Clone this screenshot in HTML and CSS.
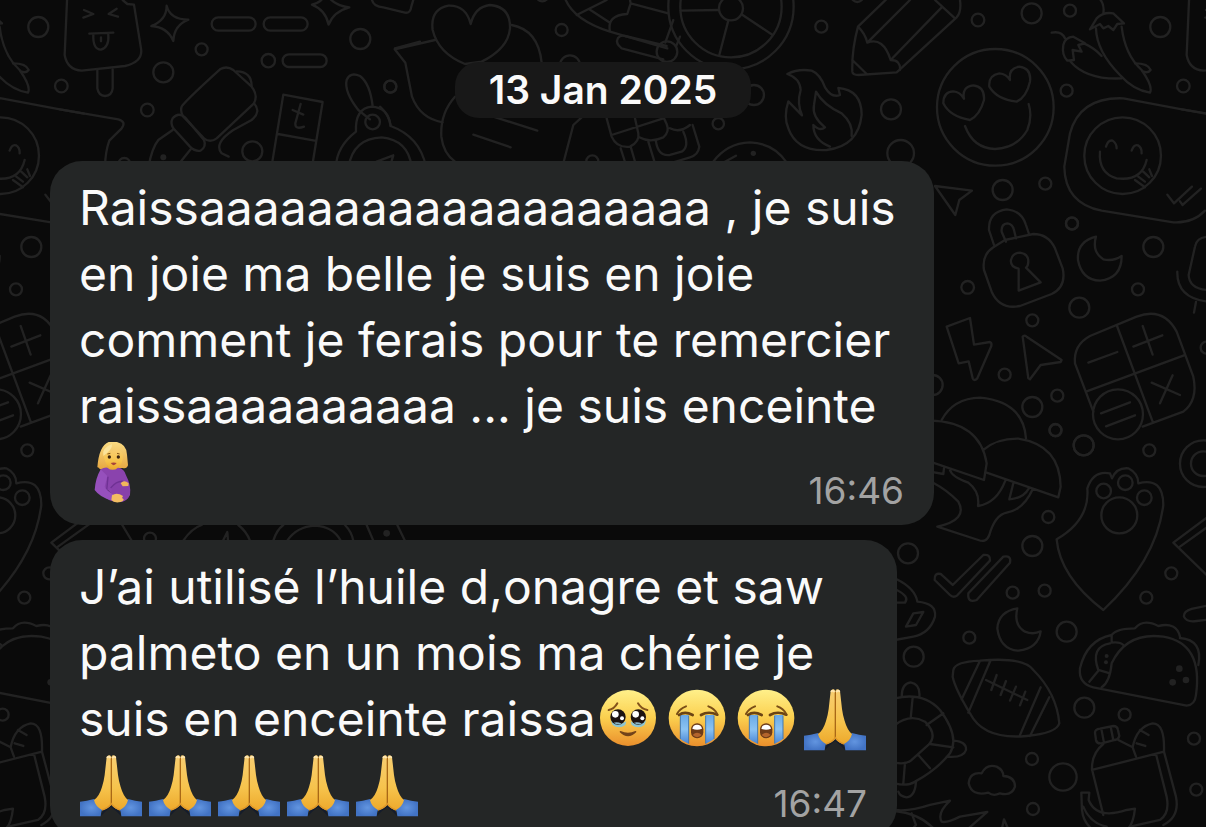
FILE: index.html
```html
<!DOCTYPE html>
<html lang="fr">
<head>
  <meta charset="UTF-8">
  <meta name="viewport" content="width=device-width, initial-scale=1.0">
  <title>Chat</title>
  <link rel="stylesheet" href="styles.css">
</head>
<body>
  <!-- Emoji -->
  <svg class="sprites" aria-hidden="true">
    <defs>
      <linearGradient id="face" x1="0" y1="0" x2="0" y2="1">
        <stop offset="0" stop-color="#fff08a"/>
        <stop offset=".5" stop-color="#fbcf4e"/>
        <stop offset="1" stop-color="#ea8f2c"/>
      </linearGradient>
      <linearGradient id="skin" x1="0" y1="0" x2="0" y2="1">
        <stop offset="0" stop-color="#f8ce72"/>
        <stop offset=".6" stop-color="#f6c34c"/>
        <stop offset="1" stop-color="#eda92c"/>
      </linearGradient>
      <linearGradient id="hair" x1="0" y1="0" x2="0" y2="1">
        <stop offset="0" stop-color="#fbdc83"/>
        <stop offset="1" stop-color="#e6a63f"/>
      </linearGradient>
      <linearGradient id="tear" x1="0" y1="0" x2="0" y2="1">
        <stop offset="0" stop-color="#6aa9e6"/>
        <stop offset=".5" stop-color="#8bc3f3"/>
        <stop offset="1" stop-color="#4a86d6"/>
      </linearGradient>
      <radialGradient id="sleeve">
        <stop offset="0" stop-color="#6295e0"/>
        <stop offset="1" stop-color="#4273c4"/>
      </radialGradient>
    </defs>
    <symbol id="pray" viewBox="0 0 186 186">
      <path d="M0 140 Q20 138 42 132 L68 160 Q62 172 62 184 H0Z" fill="url(#sleeve)"/>
      <path d="M186 140 Q166 138 144 132 L118 160 Q124 172 124 184 H186Z" fill="url(#sleeve)"/>
      <path d="M62 184 L72 162 L93 146 L114 162 L124 184 L108 168 L93 156 L78 168Z" fill="#141c2c"/>
      <path d="M80 6 Q84 -1 90 1 L94 6 V150 Q82 163 66 165 Q46 154 42 135 Q58 124 66 96 Q72 76 74 60Z" fill="url(#skin)"/>
      <path d="M108 6 Q104 -1 98 1 L94 6 V150 Q106 163 120 165 Q140 154 144 135 Q130 124 122 96 Q116 76 114 60Z" fill="url(#skin)"/>
      <path d="M94 8 V148" fill="none" stroke="#a96816" stroke-width="4"/>
      <path d="M66 165 Q84 160 94 146 Q104 160 120 165" fill="none" stroke="#dd962a" stroke-width="4"/>
      <path d="M82 7 Q87 2 90 8 M98 8 Q103 2 106 7" fill="none" stroke="#ffe7b4" stroke-width="5" stroke-linecap="round"/>
    </symbol>
    <symbol id="cry" viewBox="0 0 186 186">
      <circle cx="93" cy="87" r="85" fill="url(#face)"/>
      <path d="M43 78 H68 V164 Q52 158 43 150Z" fill="url(#tear)"/>
      <path d="M119 78 H144 V150 Q134 158 119 164Z" fill="url(#tear)"/>
      <path d="M43 80 V150 M68 80 V164 M119 80 V164 M144 80 V150" fill="none" stroke="#4378b0" stroke-width="3"/>
      <path d="M39 78 Q56 65 80 78 M105 78 Q127 65 154 77" fill="none" stroke="#6b4414" stroke-width="8" stroke-linecap="round"/>
      <path d="M33 75 Q41 59 60 52 M127 52 Q145 58 153 74" fill="none" stroke="#7a4e17" stroke-width="6" stroke-linecap="round"/>
      <rect x="75" y="103" width="37" height="45" rx="18" fill="#6d3b18"/>
      <path d="M79 119 Q81 107 93 107 Q106 107 108 119 Q93 125 79 119Z" fill="#fff"/>
      <path d="M80 138 Q93 124 107 138 Q93 151 80 138Z" fill="#b3642c"/>
    </symbol>
    <symbol id="touched" viewBox="0 0 186 186">
      <circle cx="93" cy="87" r="84" fill="url(#face)"/>
      <path d="M41 94 Q62 114 88 97 L85 108 Q66 122 47 108Z M101 97 Q125 114 148 94 L142 108 Q124 122 104 108Z" fill="#8cc5d2"/>
      <circle cx="63" cy="84" r="23" fill="#1c1210"/>
      <circle cx="124" cy="84" r="23" fill="#1c1210"/>
      <circle cx="55" cy="76" r="10" fill="#fff"/>
      <circle cx="116" cy="76" r="10" fill="#fff"/>
      <circle cx="75" cy="88" r="6" fill="#fff"/>
      <circle cx="136" cy="88" r="6" fill="#fff"/>
      <path d="M50 101 Q62 98 74 104 Q60 109 50 101Z M111 101 Q123 98 135 104 Q121 109 111 101Z" fill="#8bb5c5"/>
      <path d="M35 63 Q52 60 61 43 M123 43 Q133 60 151 63" fill="none" stroke="#83521b" stroke-width="6" stroke-linecap="round"/>
      <path d="M70 128 Q93 151 116 128 Q93 139 70 128Z" fill="#72431a" stroke="#72431a" stroke-width="4" stroke-linejoin="round"/>
    </symbol>
    <symbol id="pregnant" viewBox="0 0 186 186">
      <path d="M52 76 Q58 0 96 -2 Q140 0 141 38 L144 70 Q140 82 128 78 L80 80 Q62 88 54 76Z" fill="url(#hair)"/>
      <path d="M82 66 H116 V84 Q98 96 82 84Z" fill="#e5a83a"/>
      <path d="M70 28 Q94 34 108 22 Q124 26 128 34 Q132 76 101 81 Q72 76 70 28Z" fill="url(#skin)"/>
      <path d="M70 42 Q64 18 96 6 Q98 22 70 42Z" fill="#fbe39a"/>
      <circle cx="88" cy="45" r="5" fill="#3c240f"/>
      <circle cx="115" cy="45" r="5" fill="#3c240f"/>
      <path d="M82 36 L91 34 M111 34 L119 36" stroke="#8a5a1c" stroke-width="3"/>
      <path d="M92 63 Q101 60 110 63 Q101 76 92 63Z" fill="#a8443a"/>
      <path d="M62 82 Q72 76 82 77 Q98 90 114 77 Q134 80 138 100 Q154 130 150 158 Q140 182 112 180 Q92 178 84 172 L88 148 L70 136Z" fill="#8a43ad"/>
      <ellipse cx="122" cy="150" rx="28" ry="29" fill="#8740aa"/>
      <path d="M84 104 L80 146 L100 160 M92 138 Q110 116 130 118" fill="none" stroke="#6f3194" stroke-width="4"/>
      <path d="M62 82 Q46 110 44 144 Q60 166 94 175 L100 157 Q82 148 74 134 L82 102Z" fill="#9650bc"/>
      <path d="M96 160 Q110 150 129 162 L126 168 Q138 174 122 180 Q102 184 94 174Z" fill="#f3bd62"/>
      <path d="M122 124 Q132 112 146 124 L145 132 L128 133Z" fill="#f1b75a"/>
    </symbol>
  </svg>

  <!-- Wallpaper: one tile of doodles, repeated on both sides -->
  <svg class="wallpaper" viewBox="0 0 1206 827" preserveAspectRatio="xMinYMin slice" aria-hidden="true">
    <defs>
      <g id="doodles">
        <!-- top left: lolly, sparkles, morse, bottle, ruler, compass -->
        <g transform="scale(.3333)">
          <path d="M202 -20 L194 165 Q202 210 245 212 L375 198 Q430 185 423 145 L402 14 L382 12 L368 0"/>
          <path d="M292 210 V265 Q296 288 315 288 Q336 286 338 265 V208"/>
          <path d="M252 30 L280 42 L250 53 M350 26 L326 42 L354 50 M268 101 L340 98 M280 104 Q278 148 303 149 Q328 142 325 104 M303 112 V124"/>
          <path d="M500 17 Q510 58 565 59 Q522 76 520 123 Q503 82 454 78 Q500 60 500 17Z"/>
          <path d="M975 -30 Q990 15 1048 22 Q1000 35 986 74 Q977 30 936 14 Q975 5 975 -30Z"/>
          <rect x="635" y="52" width="132" height="40" rx="20"/>
          <rect x="791" y="52" width="132" height="40" rx="20"/>
          <rect x="848" y="163" width="132" height="38" rx="19"/>
          <path d="M545 320 Q550 308 660 208 Q680 196 700 210 L755 260 Q775 285 762 310 L650 415 Q630 430 612 415 L550 350 Q540 335 545 320Z"/>
          <path d="M518 355 Q535 335 555 352 L612 420 Q620 440 602 452 Q585 455 570 440 L520 385 Q510 370 518 355Z M518 390 L475 420 Q455 445 446 500 M572 448 L530 500"/>
          <path d="M710 214 Q755 215 755 258 M762 310 Q785 335 755 360 L700 390 Q640 430 665 460 L686 470"/>
          <path d="M800 590 L850 284 L968 306 L920 600 M834 402 L944 422 M902 312 L886 370 Q885 390 912 380 M878 330 L910 344"/>
          <path d="M1075 330 Q1032 275 1040 240 Q1050 215 1080 228 Q1110 250 1118 318 M1075 330 L1110 358"/>
          <path d="M1068 395 Q1065 325 1115 320 Q1165 322 1172 378 Q1260 410 1278 500 M1068 395 Q1010 440 1008 500"/>
          <circle cx="1118" cy="366" r="22"/>
          <path d="M1046 500 Q1060 415 1145 412 Q1225 420 1235 500 M1130 485 L1180 466 L1170 500"/>
          <path d="M1185 145 L1260 125 M1115 -5 Q1118 20 1150 22 L1215 38 Q1232 40 1234 20 L1240 0"/>
          <path d="M180 328 L355 358 Q380 365 365 385 L328 422 Q316 455 315 500"/>
          <circle cx="184" cy="258" r="19"/><circle cx="490" cy="217" r="30"/>
          <circle cx="605" cy="148" r="18"/><circle cx="805" cy="182" r="20"/><circle cx="1081" cy="117" r="30"/>
          <circle cx="442" cy="330" r="19"/><circle cx="757" cy="454" r="30"/><circle cx="1171" cy="260" r="18"/><circle cx="373" cy="492" r="18"/>
          <circle class="dot" cx="490" cy="472" r="9"/>
        </g>
        <!-- top centre: heart, letter, roller skate, wheel -->
        <g transform="translate(380 0) scale(.3333)">
          <path d="M272 72 Q258 15 205 17 Q150 28 158 90 Q175 160 255 192 L305 185 Q385 145 390 85 Q392 20 330 15 Q285 20 272 72Z"/>
          <path d="M165 120 L44 148 L76 188 L96 290 Q120 355 188 367 M395 75 Q475 90 485 188 M225 290 Q180 340 184 410 Q190 460 225 485"/>
          <path d="M340 350 L472 392 M280 404 L392 442 M550 490 L580 375 L605 352"/>
          <path d="M555 -5 Q580 60 690 95 L862 145 M590 45 L680 0 M628 28 L690 68 M690 95 Q680 45 742 42 L752 10 L865 40 M752 10 L748 -10"/>
          <path d="M735 108 L860 138 M850 178 L725 145 Q705 130 714 114 Q722 104 735 108"/>
          <circle cx="861" cy="155" r="31"/>
          <path d="M856 128 L880 60 M888 140 L900 110"/>
          <circle cx="1053" cy="20" r="188"/><circle cx="1053" cy="20" r="152"/><circle cx="1053" cy="25" r="36"/>
          <path d="M1017 30 L902 32 M1045 62 L1018 165 M1088 45 L1178 105"/>
          <path d="M680 355 L695 410 Q710 445 750 440 Q780 425 775 400 L765 355 M695 405 L850 355 M778 412 Q810 430 850 412 Q870 395 860 372 L852 355 M870 385 Q900 400 930 375 M722 445 L738 495 M752 440 L768 495 M805 425 L825 490 M938 375 L958 440 Q955 465 930 472 L870 490 M828 425 Q835 470 870 465 L905 455 Q930 440 910 395"/>
          <path d="M1000 485 Q1040 430 1110 427 Q1180 430 1218 485 M1035 485 L1068 467"/>
          <circle cx="545" cy="90" r="18"/><circle cx="31" cy="260" r="18"/><circle cx="570" cy="196" r="30"/>
          <circle cx="1122" cy="285" r="30"/><circle cx="1015" cy="371" r="17"/><circle cx="487" cy="-14" r="18"/><circle cx="637" cy="484" r="18"/>
          <path d="M0 320 Q28 345 32 378"/>
          <circle class="dot" cx="1120" cy="460" r="8"/>
        </g>
        <!-- top right: pencil, flame, heart eyes, chillies, smiley sticker -->
        <g transform="translate(780 0) scale(.3333)">
          <path d="M325 -8 L234 80 Q215 150 217 215 Q218 225 235 225 L350 217 L530 52 Q545 35 540 0 M234 80 Q255 100 262 128 L390 0 M262 128 Q310 110 332 180 L485 22 M332 180 Q362 180 360 210 M217 180 L260 222 M465 0 L525 55"/>
          <path d="M22 222 Q55 205 95 212 Q120 222 135 262 Q155 295 180 285 L175 264 Q245 270 245 345 Q235 440 140 450 Q50 455 25 385 Q10 350 25 304 L66 346 Q50 310 62 270 Q60 235 22 222Z"/>
          <path d="M150 440 Q100 420 100 375 Q120 395 135 382 Q95 350 102 315 L108 275 Q130 315 185 340 Q220 370 215 408"/>
          <circle cx="646" cy="322" r="175"/>
          <path d="M552 296 Q545 260 580 256 Q615 260 612 300 Q600 345 570 360 Q510 350 490 310 Q490 275 520 274 Q540 275 552 296Z M690 240 Q685 205 718 200 Q755 205 750 245 Q740 290 710 305 Q650 298 628 260 Q625 225 658 220 Q680 222 690 240Z"/>
          <path d="M555 378 Q580 445 645 447 Q710 445 742 390 Q758 350 746 312"/>
          <path d="M930 88 L950 55 Q970 35 1000 40 L1032 70 L1012 72 L1000 90 L985 78 L970 85 L960 72Z M948 85 Q950 155 1020 225 Q1060 270 1110 278 Q1120 260 1085 210 Q1035 165 1025 80 M970 40 Q975 10 955 -8"/>
          <path d="M850 135 Q855 112 880 110 L915 130 L895 135 L905 155 L878 150 L882 180 L862 182 Q845 165 850 135Z M815 98 Q845 92 855 115 M872 185 Q920 240 1025 235 M912 130 Q945 145 965 168 M1065 190 Q1105 190 1112 210 Q1105 220 1090 215"/>
          <path d="M1206 328 L1030 295 Q900 290 870 400 L853 500 Q855 610 965 632 L1180 667 Q1240 670 1275 632 M1206 328 L1278 341"/>
          <circle cx="1028" cy="467" r="115"/>
          <path d="M978 440 Q985 418 998 422 Q1010 430 1010 445 M1055 452 Q1062 432 1074 436 Q1086 443 1085 460 M960 455 Q955 520 1010 535 Q1085 545 1100 480 M1065 540 L1095 562 M1108 508 L1116 528 M1075 530 L1095 545 M1090 515 L1108 532"/>
          <path d="M1162 584 L1182 610 L1236 560 M1200 604 L1208 615 L1263 566"/>
          <path d="M465 558 L576 572 L538 600 L526 645Z"/>
          <circle cx="124" cy="80" r="18"/><circle cx="333" cy="328" r="30"/><circle cx="362" cy="460" r="40"/><circle cx="594" cy="60" r="19"/>
          <circle cx="755" cy="40" r="30"/><circle cx="870" cy="32" r="18"/><circle cx="1141" cy="81" r="30"/><circle cx="860" cy="272" r="18"/>
          <circle cx="668" cy="570" r="30"/><circle cx="796" cy="551" r="18"/><circle cx="876" cy="670" r="18"/><circle cx="232" cy="-12" r="18"/>
        </g>
        <!-- right: padlock, moon, mic, bolt, cursor, calculator -->
        <g transform="translate(920 220) scale(.3333)">
          <path d="M255 60 L340 42 Q385 42 405 85 L428 145 Q440 200 395 222 L300 258 Q240 270 215 215 L192 150 Q185 105 220 82Z"/>
          <path d="M222 75 L207 30 Q205 -25 260 -32 Q305 -28 318 15 L327 42 M258 65 L245 35 Q243 12 262 10 Q278 12 282 30 L288 55"/>
          <path d="M296 146 Q270 140 273 120 Q278 98 300 98 Q325 102 325 124 Q325 138 318 143 L362 187 L296 212Z"/>
          <path d="M528 50 Q470 65 474 120 Q485 180 540 182 Q605 175 605 108 Q580 125 550 118 Q515 95 528 50Z"/>
          <path d="M870 50 Q830 50 825 80 L806 165 Q808 205 860 210 M772 155 Q770 235 865 245 M828 246 L822 278"/>
          <path d="M80 320 L150 294 L162 374 L210 366 Q216 368 214 378 L172 475 Q162 485 158 475 L146 424 L116 430Z"/>
          <path d="M308 350 Q312 344 320 350 L425 420 L422 426 L362 435 L330 478 L325 475Z"/>
          <path d="M520 575 L465 430 Q460 375 510 348 L650 290 Q730 260 770 335 L820 470 Q835 540 790 575 L668 620 M590 315 L698 605 M500 514 L792 406 M505 428 L592 396 M640 380 L727 346 M668 318 L698 404 M695 488 L780 525 M758 466 L720 550"/>
          <circle cx="594" cy="583" r="75"/><path d="M543 580 L630 547 M558 619 L645 586"/>
          <circle cx="456" cy="11" r="18"/><circle cx="700" cy="81" r="30"/><circle cx="143" cy="202" r="19"/><circle cx="654" cy="208" r="18"/>
          <circle cx="478" cy="263" r="30"/><circle cx="337" cy="301" r="18"/><circle cx="254" cy="464" r="18"/><circle cx="337" cy="561" r="30"/>
          <circle cx="412" cy="527" r="18"/><circle cx="407" cy="631" r="18"/><circle cx="38" cy="495" r="30"/><circle cx="860" cy="383" r="18"/><circle cx="491" cy="676" r="30"/>
          <path d="M65 600 Q100 535 180 533 Q310 545 318 655"/>
        </g>
        <!-- right: mushrooms, ticks, paw, book -->
        <g transform="translate(880 420) scale(.3333)">
          <path d="M150 2 Q300 5 320 130 L312 180 L150 125 M310 90 Q350 55 415 56 Q540 75 542 200 L535 232 L320 158 M192 145 L190 162 L150 155 M210 150 Q215 170 265 188 Q300 215 294 258 Q350 250 376 182 M400 190 L388 238 Q430 235 446 206 M458 208 Q430 270 380 278 Q345 285 328 345 Q318 370 295 360 L172 320 Q265 300 235 245 Q200 210 162 190"/>
          <path d="M164 480 Q162 458 182 462 L218 495 L310 405 Q332 402 330 422 L232 526 Q220 535 210 525Z M265 520 L370 410 Q395 405 390 428 L290 540 Q262 550 265 520Z"/>
          <path d="M530 358 Q630 300 622 205 Q640 150 690 160 L696 175 Q710 142 745 145 Q775 160 775 190 Q850 170 850 255 Q830 420 670 570 Q540 470 530 358Z"/>
          <circle cx="718" cy="286" r="54"/><circle cx="671" cy="213" r="22"/><circle cx="736" cy="188" r="22"/><circle cx="793" cy="233" r="22"/>
          <path d="M1045 245 L880 368 L990 475 M1060 265 L900 380 M1055 252 L1120 360"/>
          <circle cx="970" cy="131" r="70"/><circle cx="970" cy="131" r="37"/>
          <path d="M990 555 L935 567 Q910 575 912 590 Q920 608 950 603 L990 598"/>
          <path d="M50 478 Q105 505 112 545 Q170 550 165 590 Q150 640 100 650 L45 660 M50 510 Q90 530 75 548 L50 548 M78 620 L100 580 L130 576 L108 615Z"/>
          <circle cx="526" cy="30" r="18"/><circle cx="611" cy="76" r="30"/><circle cx="808" cy="91" r="18"/><circle cx="505" cy="291" r="18"/><circle cx="457" cy="378" r="30"/>
          <circle cx="84" cy="400" r="30"/><circle cx="398" cy="518" r="18"/><circle cx="494" cy="512" r="18"/><circle cx="874" cy="460" r="18"/><circle cx="799" cy="533" r="18"/>
        </g>
        <!-- bottom right: moon, football, taco, turtle, cloud, lunch bag -->
        <g transform="translate(880 610) scale(.3333)">
          <path d="M412 -5 Q355 5 352 55 Q360 118 415 122 Q475 115 482 64 Q460 75 435 65 Q400 45 412 -5Z"/>
          <path d="M220 180 Q225 155 300 152 Q430 140 460 180 Q530 250 538 340 Q530 370 440 378 Q310 390 270 310 Q225 235 218 200Z M300 152 L245 268 M332 150 L265 308 M482 232 L418 380 M508 262 L450 378 M318 210 L442 270 M350 195 L334 240 M378 213 L362 255 M408 230 L390 272 M436 245 L420 286"/>
          <path d="M640 232 Q595 220 600 175 Q620 90 695 75 Q710 55 765 55 Q790 25 835 48 Q890 35 900 80 M640 232 L920 287 Q945 285 948 255 Q970 100 850 80 Q740 65 695 160 Q690 215 665 232 M900 84 Q970 90 955 165 M695 75 L695 98 Q720 95 730 105 M690 100 Q630 110 655 180 L690 190 M655 182 L628 215"/>
          <circle class="dot" cx="898" cy="176" r="10"/><circle class="dot" cx="878" cy="217" r="10"/><circle class="dot" cx="918" cy="210" r="10"/><circle class="dot" cx="680" cy="138" r="6"/><circle class="dot" cx="678" cy="157" r="6"/>
          <path d="M45 265 Q130 245 180 300 Q240 380 210 430 Q170 480 105 515 Q80 530 45 520 M45 345 Q90 310 135 335 Q175 375 145 405 L95 450 Q75 465 45 458 M65 260 Q65 220 92 217 Q122 222 118 262 M98 262 L92 325 M190 310 L140 345 M220 412 L150 402 M150 475 L115 435 M70 520 L75 458 M222 392 Q260 395 258 420 Q250 445 200 440 M108 515 Q105 560 80 562 Q60 560 55 545"/>
          <path d="M305 490 Q320 460 350 470 Q370 480 370 498 Q405 500 405 530 Q395 560 360 550 Q340 560 325 548 Q275 560 266 520 Q270 485 305 490Z"/>
          <path d="M645 368 Q645 358 660 356 L700 348 Q712 348 714 360 L718 378 Q716 388 705 390 L665 400 Q650 402 648 390Z M664 356 L672 398 M692 350 L700 390"/>
          <path d="M670 402 Q635 430 636 478 L670 615 M715 390 L758 412 L768 440 M636 480 L852 425 Q855 340 818 340 Q770 350 758 412 M780 360 L806 375 M770 400 L796 408 M828 432 L860 560 Q870 610 840 630 L750 650 M852 425 L888 560 Q900 620 850 645"/>
          <path d="M604 548 L628 548 L626 570 Q650 630 740 600 L765 596 Q760 640 745 655 M604 548 L606 600 Q610 640 640 660 M610 590 Q630 640 680 650"/>
          <path d="M45 600 Q90 605 150 585 L210 572 Q170 610 185 635 Q200 640 240 620 L322 606 L260 660 M95 610 L108 645 L95 660 M45 603 Q120 610 165 660 M365 660 L372 628 L386 660"/>
          <circle cx="268" cy="83" r="18"/><circle cx="560" cy="65" r="30"/><circle cx="101" cy="140" r="30"/><circle cx="613" cy="293" r="30"/><circle cx="734" cy="314" r="18"/>
          <circle cx="456" cy="447" r="18"/><circle cx="549" cy="501" r="41"/><circle cx="459" cy="597" r="18"/><circle cx="942" cy="386" r="18"/><circle cx="949" cy="539" r="18"/>
        </g>
        <!-- strip between the bubbles -->
        <g transform="translate(0 510) scale(.3333)">
          <path d="M550 92 Q575 55 605 45 M670 90 L682 66 L684 90 M715 45 Q740 65 750 92 M820 92 Q830 60 850 45 M862 92 Q890 50 945 47 Q1000 50 1022 92 M1035 45 Q1055 65 1060 92 M1100 45 L1120 92 M1192 45 L1215 92"/>
          <circle cx="450" cy="86" r="18"/><circle class="dot" cx="1160" cy="70" r="10"/>
        </g>
      </g>
    </defs>
    <use href="#doodles"/>
    <use href="#doodles" x="-1122"/>
    <use href="#doodles" x="1122"/>
  </svg>

  <main class="chat">
    <time class="date" datetime="2025-01-13">13 Jan 2025</time>

    <div class="bubble">
      <p>Raissaaaaaaaaaaaaaaaaaaa , je suis<br>
        en joie ma belle je suis en joie<br>
        comment je ferais pour te remercier<br>
        raissaaaaaaaaaa ... je suis enceinte<br>
        <svg class="emoji" role="img" aria-label="femme enceinte"><use href="#pregnant"/></svg></p>
      <time class="sent">16:46</time>
    </div>

    <div class="bubble short">
      <p>J’ai utilisé l’huile d,onagre et saw<br>
        palmeto en un mois ma chérie je<br>
        suis en enceinte raissa<svg class="emoji" role="img" aria-label="ému"><use href="#touched"/></svg><svg class="emoji" role="img" aria-label="pleurs"><use href="#cry"/></svg><svg class="emoji" role="img" aria-label="pleurs"><use href="#cry"/></svg><svg class="emoji" role="img" aria-label="merci"><use href="#pray"/></svg><br>
        <svg class="emoji" role="img" aria-label="merci"><use href="#pray"/></svg><svg class="emoji" role="img" aria-label="merci"><use href="#pray"/></svg><svg class="emoji" role="img" aria-label="merci"><use href="#pray"/></svg><svg class="emoji" role="img" aria-label="merci"><use href="#pray"/></svg><svg class="emoji" role="img" aria-label="merci"><use href="#pray"/></svg></p>
      <time class="sent">16:47</time>
    </div>
  </main>
</body>
</html>
```
FILE: styles.css
```css
* {
  margin: 0;
  padding: 0;
  box-sizing: border-box;
}
body {
  background-color: #0a0a0a;
  color: #fafafa;
  font-family: Inter, "Liberation Sans", sans-serif;
  height: 100vh;
  overflow: hidden;
  position: relative;
}
.sprites {
  position: absolute;
  width: 0;
  height: 0;
}
/* Doodle wallpaper behind the chat */
.wallpaper {
  position: absolute;
  top: 0;
  left: 0;
  width: 100%;
  height: 100%;
  z-index: -1;
  fill: none;
  stroke: #222222;
  stroke-width: 7px;
  stroke-linecap: round;
  stroke-linejoin: round;
}
.wallpaper .dot {
  fill: #222222;
  stroke: none;
}
.chat {
  display: flex;
  flex-direction: column;
  align-items: flex-start;
  padding: 62px 50px 0;
}
.date {
  align-self: center;
  background-color: #181818;
  padding: 0 34px;
  border-radius: 24px;
  font-size: 39px;
  font-weight: 600;
  line-height: 56px;
  margin-bottom: 43px;
}
.bubble {
  position: relative;
  flex-shrink: 0;
  width: 884px;
  max-width: 100%;
  padding: 14px 29px 20px;
  background-color: #242626;
  border-radius: 32px;
  margin-bottom: 15px;
}
.bubble.short {
  width: 847px;
}
.bubble p {
  font-size: 48px;
  line-height: 66px;
  white-space: nowrap;
}
.emoji {
  width: 62px;
  height: 62px;
  margin: 3px 6px 0 1px;
  vertical-align: top;
  overflow: visible;
}
/* Time sits over the last line of the message */
.sent {
  position: absolute;
  right: 30px;
  bottom: 12px;
  color: #a3a3a3;
  font-size: 37px;
  line-height: 44px;
}
```
